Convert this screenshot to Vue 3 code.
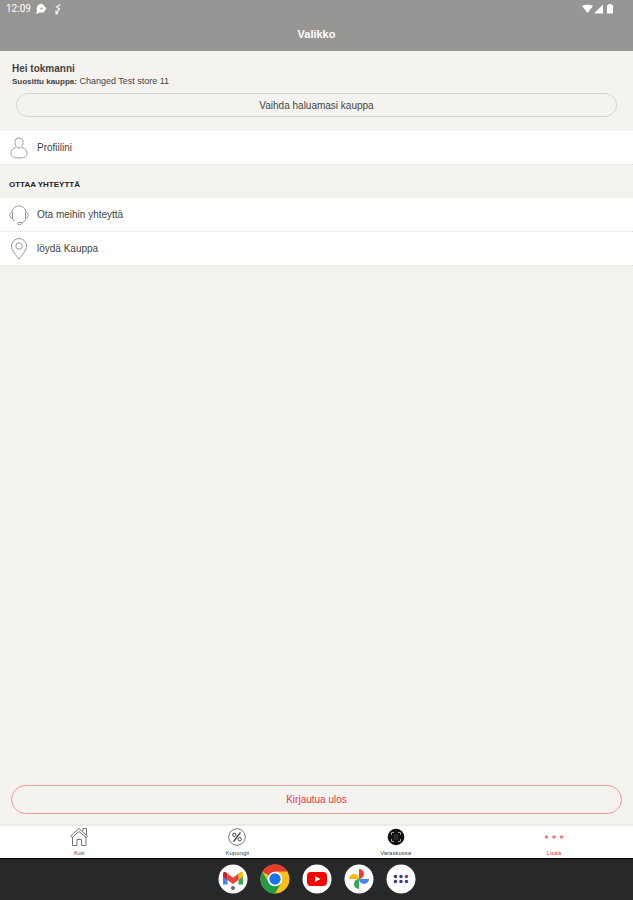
<script setup>
const contactLinks = [
  { id: 'contact', label: 'Ota meihin yhteyttä' },
  { id: 'store', label: 'löydä Kauppa' },
]
const tabs = [
  { id: 'home', label: 'Koti' },
  { id: 'coupons', label: 'Kupongit' },
  { id: 'card', label: 'Varaskossa' },
  { id: 'more', label: 'Lisää' },
]
const dots = [0, 1, 2, 3, 4, 5]
</script>

<template>
  <div class="screen">
    <header class="top">
      <div class="status">
        <span class="clock">12:09</span>
        <svg class="status-icon" viewBox="0 0 12 12" aria-hidden="true">
          <path d="M6 .5 8 1.500 11.500 5.500 8.500 9.500 5 9.500 1 11 2 8 1.500 5 3 2Z" fill="#fff" />
          <circle cx="6.500" cy="5.500" r="1" fill="#979694" />
        </svg>
        <svg class="status-icon bolt" viewBox="0 0 12 12" aria-hidden="true">
          <path d="M8.500 1.500 4.500 4 7.500 6 4 10.500M4 7.500v3h2" fill="none" stroke="#eee" stroke-width="1.300" />
        </svg>
        <svg class="signals" viewBox="0 0 34 12" aria-hidden="true">
          <path d="M0 3Q5.500 0 11 3L5.500 10Z" fill="#fff" />
          <path d="M12 10.500 21 1.500V10.500Z" fill="#fff" />
          <path d="M26.500 1h3v1h1.500v8.500h-6V2h1.500Z" fill="#fff" />
        </svg>
      </div>
      <h1>Valikko</h1>
    </header>

    <main>
      <section class="greeting">
        <h2>Hei tokmanni</h2>
        <p><strong>Suosittu kauppa:</strong> Changed Test store 11</p>
        <button type="button" class="change">Vaihda haluamasi kauppa</button>
      </section>

      <a href="#profile" class="row">
        <svg class="row-icon" viewBox="0 0 20 24" aria-hidden="true">
          <path d="M10 2C7 2 6 3.500 6 6.500S7.500 12 10 12s4-2.500 4-5.500S13 2 10 2Z" />
          <path d="M7 11.500C3.500 12.500 2 14.500 2 17.500 2 20.500 5 22 10 22s8-1.500 8-4.500c0-3-1.500-5-5-6" />
        </svg>
        Profiilini
      </a>

      <h3>OTTAA YHTEYTTÄ</h3>
      <nav aria-label="Ottaa yhteyttä">
        <a v-for="link in contactLinks" :key="link.id" :href="`#${link.id}`" class="row">
          <svg v-if="link.id === 'contact'" class="row-icon" viewBox="0 0 20 24" aria-hidden="true">
            <path d="M3 9.500C3.500 5.500 6 3 10 3s6.500 2.500 7 6.500M3 9.500H2C.5 10.500.5 14 2 15h1.500V9.500ZM17 9.500h1c1.500 1 1.500 4.500 0 5.500h-1.500V9.500ZM17 15c-.5 3-2 4.500-5 5M3.500 15c.3 1.500 1 2.500 2 3.500" />
            <ellipse cx="10.500" cy="20.500" rx="2" ry="1.200" />
          </svg>
          <svg v-else class="row-icon" viewBox="0 0 20 24" aria-hidden="true">
            <path d="M10 22C7 18 2.500 13.500 2.500 9a7.500 7.500 0 0 1 15 0C17.500 13.500 13 18 10 22Z" />
            <circle cx="10" cy="9" r="3.200" />
          </svg>
          {{ link.label }}
        </a>
      </nav>

      <div class="logout-area">
        <button type="button" class="logout">Kirjautua ulos</button>
      </div>
    </main>

    <nav class="tabs" aria-label="Päävalikko">
      <a v-for="tab in tabs" :key="tab.id" :href="`#${tab.id}`" :class="['tab', { active: tab.id === 'more' }]">
        <svg v-if="tab.id === 'home'" class="tab-icon" viewBox="0 0 20 20" fill="none" stroke="#777" aria-hidden="true">
          <path d="M3.500 10v8.500H8v-6h4.500v6H17V9.500M1.500 9 10 1.500 18.500 9 17 10.500 10 4.500 3 10.500ZM14 4V1.500h3.500V8" />
        </svg>
        <svg v-else-if="tab.id === 'coupons'" class="tab-icon" viewBox="0 0 20 20" fill="none" stroke="#777" aria-hidden="true">
          <circle cx="10" cy="10" r="8.300" />
          <path d="M13.500 5.500 6.500 14.500" stroke="#444" stroke-width="1.300" />
          <circle cx="7.300" cy="7.800" r="1.700" stroke="#444" />
          <circle cx="12.700" cy="12.200" r="1.700" stroke="#444" />
        </svg>
        <svg v-else-if="tab.id === 'card'" class="tab-icon" viewBox="0 0 20 20" fill="none" stroke="#999" aria-hidden="true">
          <circle cx="10" cy="10" r="8.300" fill="#111" stroke="none" />
          <path d="M5.500 8V5.500H8M12 5.500h2.500V8M14.500 12v2.500H12M8 14.500H5.500V12" />
          <path d="M7.500 8h5M7.500 10h5M7.500 12h5" stroke="#444" />
        </svg>
        <svg v-else class="tab-icon" viewBox="0 0 20 20" fill="#f37b80" aria-hidden="true">
          <circle cx="2.500" cy="10" r="1.800" /><circle cx="10" cy="10" r="1.800" /><circle cx="17.500" cy="10" r="1.800" />
        </svg>
        <span>{{ tab.label }}</span>
      </a>
    </nav>

    <footer class="dock">
      <button type="button" aria-label="Gmail">
        <svg viewBox="0 0 30 30">
          <circle cx="15" cy="15" r="14.500" fill="#fff" />
          <path d="M5 10v10.500h4.500V13Z" fill="#4285f4" />
          <path d="M25 10v10.500h-4.500V13Z" fill="#34a853" />
          <path d="M20.500 9.500 22.500 8q2.500-.8 2.500 2v2.500l-4.500 3.500Z" fill="#fbbc04" />
          <path d="M5 12.500V10q0-2.800 2.500-2l2 1.500V16Z" fill="#c5221f" />
          <path d="m9.500 9.500 5.500 4.200 5.500-4.200V16L15 20 9.500 16Z" fill="#ea4335" />
          <circle cx="15" cy="24" r="2" fill="#666" />
        </svg>
      </button>
      <button type="button" aria-label="Chrome">
        <svg viewBox="0 0 30 30">
          <circle cx="15" cy="15" r="14.500" fill="#fbc116" />
          <path d="M15 15 2.440 7.750A14.500 14.500 0 0 1 27.560 7.750H15Z" fill="#e33b2e" />
          <path d="M2.440 7.750A14.500 14.500 0 0 0 15 29.500L21.280 18.630 15 15 8.720 18.630Z" fill="#229a49" />
          <path d="M15 7.750H27.560L21.280 18.630Z" fill="#fbc116" />
          <circle cx="15" cy="15" r="7.250" fill="#fff" />
          <circle cx="15" cy="15" r="5.700" fill="#1a73e8" />
        </svg>
      </button>
      <button type="button" aria-label="YouTube">
        <svg viewBox="0 0 30 30">
          <circle cx="15" cy="15" r="14.500" fill="#fff" />
          <rect x="5" y="8" width="20" height="14" rx="4" fill="#f00" />
          <path d="m13 12 5.500 3-5.500 3Z" fill="#fff" />
        </svg>
      </button>
      <button type="button" aria-label="Kuvat">
        <svg viewBox="0 0 30 30">
          <circle cx="15" cy="15" r="14.500" fill="#fff" />
          <path d="M15 15V5a5 5 0 0 1 0 10Z" fill="#ea4335" />
          <path d="M15 15h10a5 5 0 0 1-10 0Z" fill="#4285f4" />
          <path d="M15 15v10a5 5 0 0 1 0-10Z" fill="#34a853" />
          <path d="M15 15H5a5 5 0 0 1 10 0Z" fill="#fbbc04" />
        </svg>
      </button>
      <button type="button" aria-label="Sovellukset">
        <svg viewBox="0 0 30 30">
          <circle cx="15" cy="15" r="14.500" fill="#fff" />
          <circle v-for="d in dots" :key="d" :cx="9.500 + (d % 3) * 5.500" :cy="d < 3 ? 12.500 : 17.500" r="1.700" :fill="d === 2 ? '#8a3f5c' : '#343c7c'" />
        </svg>
      </button>
    </footer>
  </div>
</template>

<style>
body {
  margin: 0;
}
</style>

<style scoped>
.screen {
  display: flex;
  flex-direction: column;
  min-height: 100vh;
  background: #f5f3ef;
  color: #444;
  font: 10px/12px "Liberation Sans", Arial, sans-serif;
}
h1,
h2,
h3,
p {
  margin: 0;
}
a {
  color: inherit;
  text-decoration: none;
}
button {
  font: inherit;
  color: inherit;
  background: none;
  cursor: pointer;
}
.top {
  height: 51px;
  background: #979694;
  color: #fff;
}
.status {
  display: flex;
  align-items: center;
  height: 18px;
  padding: 0 17px 0 6px;
}
.clock {
  font-family: Roboto, sans-serif;
  margin-right: 4px;
}
.status-icon {
  width: 12px;
  height: 12px;
}
.bolt {
  margin-left: 5px;
}
.signals {
  width: 34px;
  height: 12px;
  margin-left: auto;
}
h1 {
  padding-top: 10px;
  font-size: 11px;
  line-height: 12px;
  text-align: center;
}
main {
  display: flex;
  flex: 1;
  flex-direction: column;
}
.greeting {
  padding: 12px 12px 14px;
}
h2 {
  font-size: 10px;
  line-height: 12px;
}
.greeting p {
  font-size: 9px;
  line-height: 12px;
}
.greeting strong {
  font-size: 8px;
  line-height: 8px;
}
.change {
  display: block;
  width: calc(100% - 8px);
  height: 24px;
  margin: 6px auto 0;
  padding: 1px 0 0;
  border: 1px solid #d5d4cf;
  border-radius: 12px;
}
.row {
  display: flex;
  align-items: center;
  gap: 8px;
  height: 33px;
  padding: 0 9px;
  background: #fff;
  border-bottom: 1px dotted #ddd;
}
.row-icon {
  width: 20px;
  height: 24px;
  fill: none;
  stroke: #999;
  stroke-width: 1;
}
h3 {
  padding: 14px 9px 7px;
  color: #222;
  font-size: 8px;
  line-height: 12px;
}
.logout-area {
  margin-top: auto;
  padding: 12px 11px 10px;
}
.logout {
  width: 100%;
  height: 29px;
  padding: 0;
  border: 1px solid #f59a98;
  border-radius: 15px;
  color: #f0383c;
}
.tabs {
  display: flex;
  height: 32px;
  border-top: 2px solid #ebeae8;
  background: #fff;
}
.tab {
  display: flex;
  flex: 1;
  flex-direction: column;
  align-items: center;
  padding-top: 1px;
  font-size: 6px;
  line-height: 8px;
}
.active {
  color: #f0383c;
}
.tab-icon {
  width: 20px;
  height: 20px;
  margin-bottom: 2px;
}
.dock {
  display: flex;
  justify-content: center;
  gap: 12px;
  height: 42px;
  box-sizing: border-box;
  padding-top: 5px;
  border-top: 1px solid #000;
  background: #262829;
}
.dock button {
  width: 30px;
  height: 30px;
  padding: 0;
  border: 0;
}
.dock svg {
  display: block;
}
</style>
